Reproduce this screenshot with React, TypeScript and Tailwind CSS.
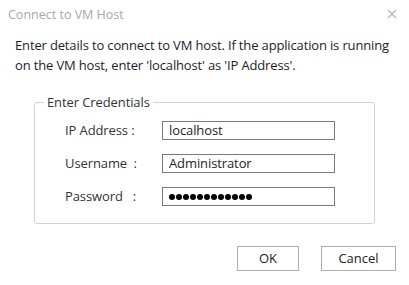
import React from "react";

const FIELDS = [
  { label: "IP Address :", value: "localhost", secret: false },
  { label: "Username  :", value: "Administrator", secret: false },
  { label: "Password   :", value: "", secret: true },
];

export default function App() {
  return (
    <div className="w-[409px] h-[285px] bg-white flex flex-col font-['Open_Sans',sans-serif] text-[#1e1e1e]">
      {/* title bar */}
      <div className="flex items-start justify-between pl-[8px] pr-[12px] pt-[6px] h-[30px]">
        <span className="text-[12.5px] leading-[18px] text-[#a8a8a8]">Connect to VM Host</span>
        <svg width="10" height="10" viewBox="0 0 10 10" className="mt-[3px]">
          <path d="M1 1 L9 9 M9 1 L1 9" stroke="#b5b5b5" strokeWidth="1.2" />
        </svg>
      </div>

      <p className="px-[15px] pt-[5px] whitespace-nowrap text-[13px] leading-[20px] tracking-[-0.15px]">
        Enter details to connect to VM host. If the application is running
        <br />
        on the VM host, enter 'localhost' as 'IP Address'.
      </p>

      <fieldset className="mx-[34px] mt-[17px] w-[341px] border border-[#d3d3d3] rounded-[3px] pb-[17px]">
        <legend className="ml-[9px] px-[3px] text-[13px] leading-[20px] tracking-[-0.1px] text-[#333]">
          Enter Credentials
        </legend>
        <div className="flex flex-col gap-[13px] pt-[8px] pl-[30px]">
          {FIELDS.map((f) => (
            <div key={f.label} className="flex items-center">
              <span className="w-[97px] whitespace-pre text-[13px] leading-[20px] tracking-[-0.1px] text-[#333]">
                {f.label}
              </span>
              <div className="w-[173px] h-[19px] border border-[#7a7a7a] flex items-center pl-[6px] text-[13px] tracking-[-0.1px] leading-[17px]">
                {f.secret ? (
                  <div className="flex gap-[1px] mt-[2px]">
                    {Array.from({ length: 12 }).map((_, i) => (
                      <span key={i} className="w-[6px] h-[6px] rounded-full bg-black" />
                    ))}
                  </div>
                ) : (
                  f.value
                )}
              </div>
            </div>
          ))}
        </div>
      </fieldset>

      <div className="flex justify-end gap-[22px] pr-[13px] mt-[22px]">
        <button className="w-[62px] h-[25px] border border-[#adadad] bg-white text-[13px] text-[#222]">OK</button>
        <button className="w-[75px] h-[25px] border border-[#adadad] bg-white text-[13px] text-[#222]">Cancel</button>
      </div>
    </div>
  );
}
